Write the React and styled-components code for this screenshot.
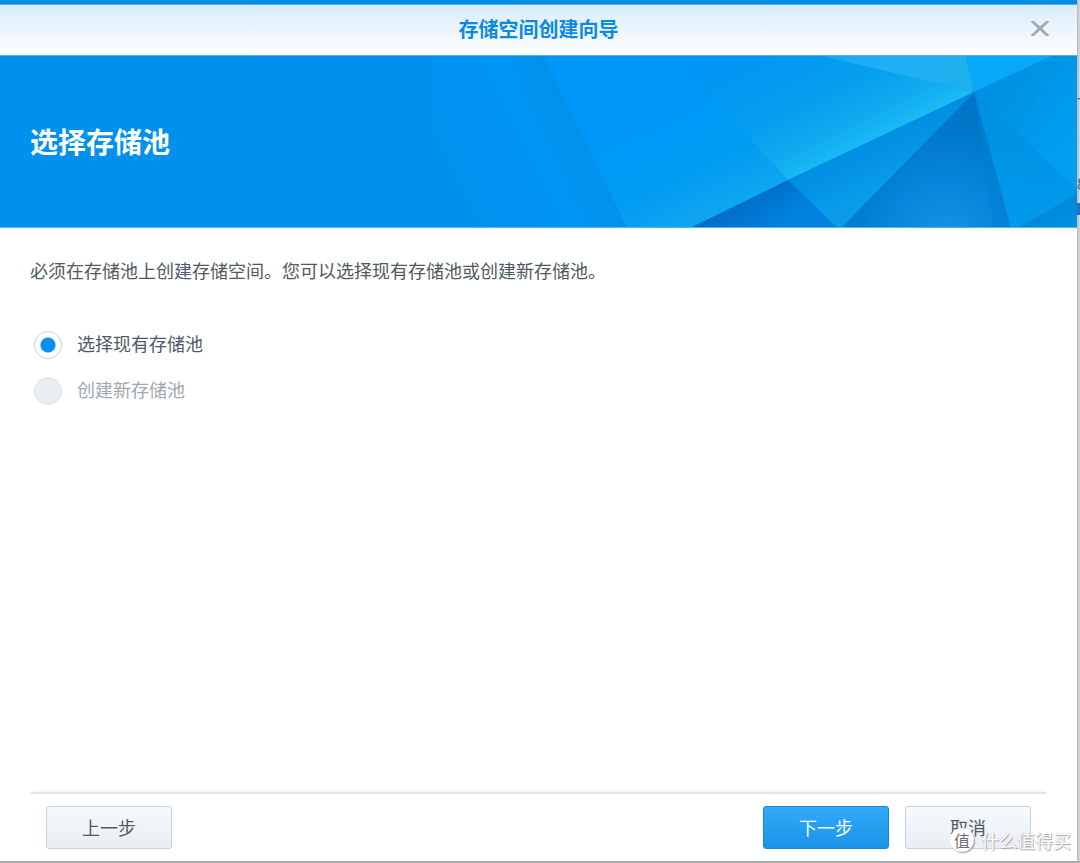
import React, { useState } from "react";
import styled, { createGlobalStyle } from "styled-components";

export default function App() {
  const [pool, setPool] = useState("existing");

  return (
    <Desktop>
      <GlobalStyle />
      <Wizard role="dialog" aria-labelledby="wizard-title">
        <TitleBar>
          <Title id="wizard-title">存储空间创建向导</Title>
          <CloseButton type="button" aria-label="关闭">
            <svg width="20" height="18" viewBox="0 0 20 18">
              <path d="M1 1H4L10 6.6L16 1H19V2L12.2 8.5L19 15V16H16L10 10.4L4 16H1V15L7.8 8.5L1 2Z" />
            </svg>
          </CloseButton>
        </TitleBar>
        <Banner>
          <Facets />
          <BannerTitle>选择存储池</BannerTitle>
        </Banner>
        <Content>
          <Description>
            必须在存储池上创建存储空间。您可以选择现有存储池或创建新存储池。
          </Description>
          <Options>
            <Option>
              <Radio
                type="radio"
                name="pool"
                checked={pool === "existing"}
                onChange={() => setPool("existing")}
              />
              选择现有存储池
            </Option>
            <Option $disabled>
              <Radio
                type="radio"
                name="pool"
                checked={pool === "new"}
                onChange={() => setPool("new")}
                disabled
              />
              创建新存储池
            </Option>
          </Options>
        </Content>
        <Footer>
          <Button type="button">上一步</Button>
          <ButtonGroup>
            <Button type="button" $primary>
              下一步
            </Button>
            <Button type="button">取消</Button>
          </ButtonGroup>
        </Footer>
      </Wizard>
      <Behind aria-hidden="true">
        <BehindCell>7</BehindCell>
        <BehindCell>8</BehindCell>
        <BehindBar />
      </Behind>
      <Watermark>
        <WatermarkBadge>值</WatermarkBadge>
        什么值得买
      </Watermark>
    </Desktop>
  );
}

function Facets() {
  return (
    <FacetsSvg viewBox="430 55 647 173" preserveAspectRatio="xMaxYMid slice">
      <defs>
        <linearGradient
          id="soft"
          gradientUnits="userSpaceOnUse"
          x1="430"
          y1="141"
          x2="578"
          y2="70"
        >
          <stop offset="0" stopColor="#0091ee" />
          <stop offset="0.35" stopColor="#0093f1" />
          <stop offset="0.6" stopColor="#0095f3" />
          <stop offset="1" stopColor="#008fe6" />
        </linearGradient>
        <linearGradient
          id="mid"
          gradientUnits="userSpaceOnUse"
          x1="690"
          y1="110"
          x2="735"
          y2="207"
        >
          <stop offset="0" stopColor="#0098f8" />
          <stop offset="0.5" stopColor="#009bf2" />
          <stop offset="1" stopColor="#10a6f0" />
        </linearGradient>
        <linearGradient
          id="glow"
          gradientUnits="userSpaceOnUse"
          x1="775"
          y1="40"
          x2="835"
          y2="160"
        >
          <stop offset="0" stopColor="#0096f4" />
          <stop offset="0.5" stopColor="#049eee" />
          <stop offset="0.8" stopColor="#0faaf0" />
          <stop offset="1" stopColor="#1abbf4" />
        </linearGradient>
        <linearGradient id="top" x1="0" x2="1" y1="0" y2="0.4">
          <stop offset="0" stopColor="#12a8f8" />
          <stop offset="0.5" stopColor="#22aff7" />
          <stop offset="1" stopColor="#1cb0ec" />
        </linearGradient>
        <linearGradient id="right" x1="0" x2="1" y1="0" y2="1">
          <stop offset="0.1" stopColor="#008de0" />
          <stop offset="0.8" stopColor="#009ff0" />
        </linearGradient>
        <linearGradient id="lower" x1="0" x2="0" y1="0" y2="1">
          <stop offset="0" stopColor="#008edf" />
          <stop offset="1" stopColor="#009bee" />
        </linearGradient>
        <linearGradient id="corner" x1="0" x2="1" y1="0" y2="1">
          <stop offset="0.3" stopColor="#0084d4" />
          <stop offset="1" stopColor="#0092e4" />
        </linearGradient>
        <radialGradient
          id="shade"
          gradientUnits="userSpaceOnUse"
          cx="945"
          cy="240"
          r="130"
        >
          <stop offset="0" stopColor="#1495e4" />
          <stop offset="0.45" stopColor="#0686da" />
          <stop offset="0.8" stopColor="#0079cb" />
          <stop offset="1" stopColor="#0076c8" />
        </radialGradient>
        <linearGradient
          id="wing"
          gradientUnits="userSpaceOnUse"
          x1="860"
          y1="146"
          x2="882"
          y2="190"
        >
          <stop offset="0" stopColor="#008ee2" />
          <stop offset="1" stopColor="#0a9ce9" />
        </linearGradient>
        <linearGradient
          id="deep"
          gradientUnits="userSpaceOnUse"
          x1="740"
          y1="203"
          x2="762"
          y2="240"
        >
          <stop offset="0" stopColor="#006fca" />
          <stop offset="1" stopColor="#0084e0" />
        </linearGradient>
      </defs>
      <path d="M430 55H543L627 228H430Z" fill="url(#soft)" />
      <path d="M543 55H673L788 180L690 228H627Z" fill="url(#mid)" />
      <path d="M673 55H818L974 92L788 180Z" fill="url(#glow)" />
      <path d="M818 55H966L974 92Z" fill="url(#top)" />
      <path d="M966 55H1054L974 92Z" fill="#08a9f9" />
      <path d="M1054 55H1077V190L974 92Z" fill="url(#right)" />
      <path d="M974 92L1077 190V194L1018 228H1011Z" fill="url(#lower)" />
      <path d="M1077 194V228H1018Z" fill="url(#corner)" />
      <path d="M974 92L1011 228H841Z" fill="url(#shade)" />
      <path d="M975 96L1011 228H994Z" fill="#0080d2" opacity="0.4" />
      <path d="M974 92L841 228H838L788 180Z" fill="url(#wing)" />
      <path d="M788 180L838 228H690Z" fill="url(#deep)" />
    </FacetsSvg>
  );
}

const GlobalStyle = createGlobalStyle`
  * {
    box-sizing: border-box;
  }
  body {
    margin: 0;
    font-family: "Noto Sans CJK SC", sans-serif;
    font-size: 18px;
    color: #505a64;
  }
  button,
  input {
    font: inherit;
    margin: 0;
  }
`;

const Desktop = styled.div`
  position: relative;
  display: flex;
  min-height: 100vh;
  padding-bottom: 2px;
  background: #a9abad;
`;

const Wizard = styled.section`
  flex: 1;
  display: flex;
  flex-direction: column;
  background: #fff;
  border-top: 4px solid #0089e6;
`;

const TitleBar = styled.header`
  position: relative;
  display: flex;
  align-items: center;
  justify-content: center;
  height: 51px;
  padding-bottom: 2px;
  border-top: 1px solid #4db0f0;
  background: linear-gradient(#d9ecf9, #fff);
`;

const Title = styled.h1`
  margin: 0;
  font-size: 20px;
  line-height: 30px;
  font-weight: 700;
  color: #0a8ae2;
`;

const CloseButton = styled.button`
  position: absolute;
  right: 20px;
  top: 7px;
  display: grid;
  place-items: center;
  width: 34px;
  height: 34px;
  padding: 0;
  border: 0;
  background: none;
  cursor: pointer;

  path {
    fill: #a2abb3;
  }
`;

const Banner = styled.div`
  position: relative;
  display: flex;
  align-items: center;
  height: 173px;
  padding: 0 30px 2px;
  border-top: 1px solid #4db3f5;
  border-bottom: 1px solid #4db3f5;
  background: #0091ee;
  overflow: hidden;
`;

const FacetsSvg = styled.svg`
  position: absolute;
  right: 0;
  top: 0;
  width: 647px;
  height: 100%;
`;

const BannerTitle = styled.h2`
  position: relative;
  margin: 0;
  font-size: 28px;
  line-height: 40px;
  font-weight: 700;
  color: #fff;
`;

const Content = styled.main`
  flex: 1;
  padding: 28px 30px 0;
`;

const Description = styled.p`
  margin: 0 0 47px;
  line-height: 28px;
`;

const Options = styled.div`
  display: flex;
  flex-direction: column;
  align-items: flex-start;
  gap: 18px;
  padding-left: 4px;
`;

const Option = styled.label`
  display: flex;
  align-items: flex-start;
  gap: 15px;
  line-height: 24px;
  color: ${(props) => (props.$disabled ? "#a0a7ae" : "#505a64")};
`;

const Radio = styled.input`
  appearance: none;
  width: 28px;
  height: 28px;
  border: 1px solid #c8d2dc;
  border-radius: 50%;
  background: #fff;

  &:checked {
    background: radial-gradient(circle, #0091f2 7px, #fff 8px);
  }
  &:disabled {
    border-color: #d8e0e9;
    background: #e9eef3;
  }
`;

const Footer = styled.footer`
  display: flex;
  justify-content: space-between;
  margin: 0 31px;
  padding: 12px 15px;
  border-top: 2px solid #e2e3e4;
  box-shadow: 0 -3px 3px -2px #f0f0f0;
`;

const ButtonGroup = styled.div`
  display: flex;
  gap: 16px;
`;

const Button = styled.button`
  width: 126px;
  height: 43px;
  padding: 0 0 2px;
  border: 1px solid ${(props) => (props.$primary ? "#1586d6" : "#c3d0de")};
  border-radius: 3px;
  background: ${(props) =>
    props.$primary
      ? "linear-gradient(#34a9fb, #1894e6)"
      : "linear-gradient(#f6fafe, #e9eef3)"};
  color: ${(props) => (props.$primary ? "#fff" : "#505a64")};
  cursor: pointer;
`;

// edge of the page that stays visible behind the wizard
const Behind = styled.div`
  display: flex;
  flex-direction: column;
  width: 3px;
  padding-top: 63px;
  overflow: hidden;
  background: linear-gradient(90deg, #b4b6b8, #dcdddf);
`;

const BehindCell = styled.span`
  height: 80px;
  flex: none;
  font-size: 16px;
  line-height: 80px;
  border-bottom: 1px solid #bfc1c3;
`;

const BehindBar = styled.span`
  flex: none;
  height: 12px;
  margin-top: -20px;
  background: #2270c4;
`;

const Watermark = styled.div`
  position: absolute;
  right: 9px;
  bottom: 9px;
  display: flex;
  align-items: center;
  gap: 7px;
  line-height: 28px;
  color: #fff;
  text-shadow: 1px 1px 1px #a4a4a4, 0 0 1px #b4b4b4;
  pointer-events: none;
`;

const WatermarkBadge = styled.span`
  display: grid;
  place-items: center;
  width: 24px;
  height: 24px;
  border-radius: 50%;
  background: #fff;
  box-shadow: 1px 1px 1px #9a9a9a;
  color: #6d7073;
  font-size: 16px;
  line-height: 24px;
  text-shadow: none;
`;
